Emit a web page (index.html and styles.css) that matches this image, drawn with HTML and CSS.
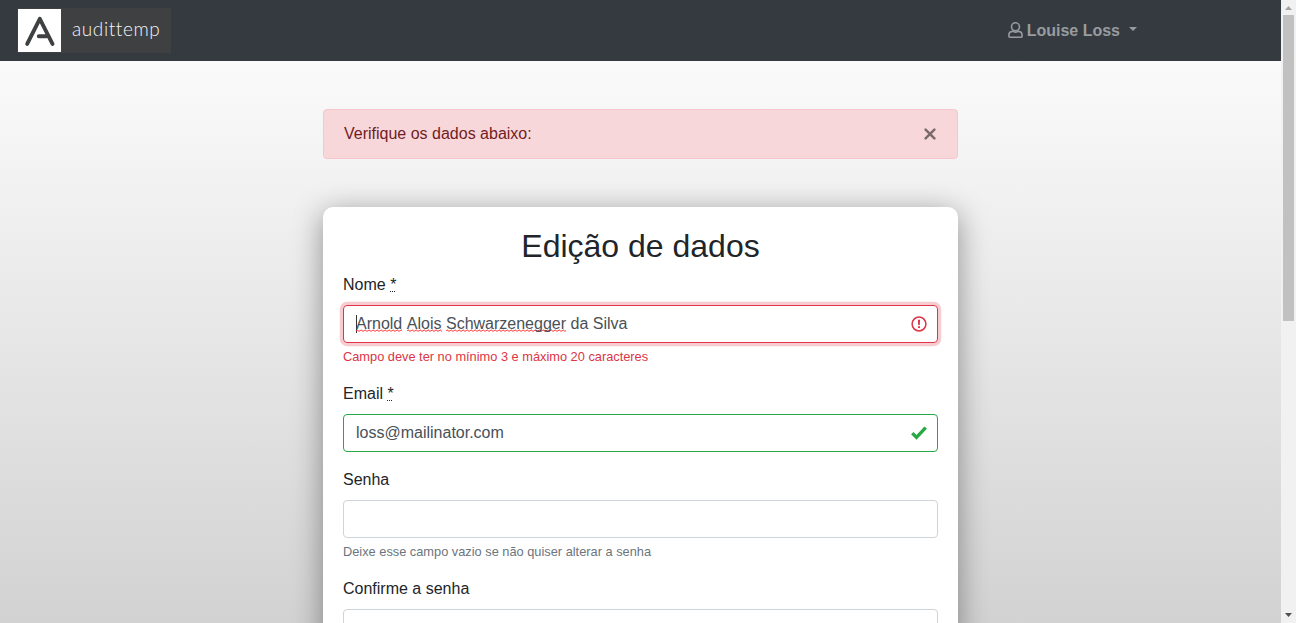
FILE: index.html
```html
<!DOCTYPE html>
<html lang="pt-BR">
<head>
<meta charset="utf-8">
<title>Edição de dados</title>
<link rel="stylesheet" href="styles.css">
</head>
<body>
<div class="viewport">
  <div class="page">
    <header class="navbar">
      <a class="brand">
        <svg class="brand-mark" viewBox="0 0 43 43" width="43" height="43"><rect width="43" height="43" fill="#fff"/><path d="M9.2 34.9 21.8 9.8 34.5 34.9M20.8 27.2H28.5" fill="none" stroke="#3e4042" stroke-width="3.9" stroke-linecap="round" stroke-linejoin="round"/></svg>
        <span class="brand-name">audittemp</span>
      </a>
      <a class="user">
        <svg class="user-icon" viewBox="0 0 15 16" width="15" height="16"><g fill="none" stroke="currentColor" stroke-width="1.6"><circle cx="7.5" cy="4.8" r="4"/><path d="M4.6 9.4C2.2 9.6.9 11.1.9 13.2v1c0 .6.4 1 1 1h11.2c.6 0 1-.4 1-1v-1c0-2.1-1.3-3.6-3.7-3.8-1.8.9-4 .9-5.8 0Z"/></g></svg>
        <span class="user-name">Louise Loss</span>
        <span class="caret-down"></span>
      </a>
    </header>
    <main class="content">
      <div class="alert">
        <span>Verifique os dados abaixo:</span>
        <svg class="close" viewBox="0 0 12 12" width="12" height="12"><path d="M1.6 1.6 10.4 10.4M10.4 1.6 1.6 10.4" stroke="#7c6b6d" stroke-width="2.5" stroke-linecap="round"/></svg>
      </div>
      <section class="card">
        <h2 class="title">Edição de dados</h2>
        <div class="group">
          <div class="label">Nome <abbr class="required" title="obrigatório">*</abbr></div>
          <div class="field invalid">
            <span class="value"><i class="cursor"></i><span class="misspelt first">Arnold</span> <span class="misspelt">Alois</span> <span class="misspelt">Schwarzenegger</span> da Silva</span>
            <svg viewBox="0 0 16 16" width="16" height="16"><circle cx="8" cy="8" r="6.9" fill="none" stroke="#dc3545" stroke-width="1.5"/><path d="M6.9 3.8h2.2l-.3 5.2H7.2Z" fill="#dc3545"/><circle cx="8" cy="11.2" r="1.1" fill="#dc3545"/></svg>
          </div>
          <div class="help error">Campo deve ter no mínimo 3 e máximo 20 caracteres</div>
        </div>
        <div class="group">
          <div class="label">Email <abbr class="required" title="obrigatório">*</abbr></div>
          <div class="field valid">
            <span class="value">loss@mailinator.com</span>
            <svg viewBox="0 0 16 16" width="16" height="16"><path d="M1.3 8.1 5.5 12.4 14.7 2.6" fill="none" stroke="#28a745" stroke-width="3.4"/></svg>
          </div>
        </div>
        <div class="group">
          <div class="label">Senha</div>
          <div class="field"></div>
          <div class="help">Deixe esse campo vazio se não quiser alterar a senha</div>
        </div>
        <div class="group">
          <div class="label">Confirme a senha</div>
          <div class="field"></div>
        </div>
      </section>
    </main>
  </div>
  <div class="scrollbar">
    <svg viewBox="0 0 15 15" width="15" height="15"><path d="M4 10h7L7.5 6Z" fill="#a3a3a3"/></svg>
    <div class="thumb"></div>
    <svg class="down" viewBox="0 0 15 15" width="15" height="15"><path d="M4 5h7L7.5 9Z" fill="#505050"/></svg>
  </div>
</div>
</body>
</html>
```
FILE: styles.css
```css
* { box-sizing: border-box; }
body {
  margin: 0;
  font: 16px/24px "Liberation Sans", Arial, sans-serif;
  color: #212529;
  overflow: hidden;
}
.viewport { display: flex; height: 623px; overflow: hidden; }
.page {
  flex: 1;
  height: 623px;
  overflow: hidden;
  background: linear-gradient(#ffffff, #d2d2d2);
}
.navbar {
  display: flex;
  align-items: center;
  justify-content: space-between;
  height: 61px;
  padding: 0 144px 0 17px;
  background: #343a40;
}
.brand {
  display: flex;
  align-items: center;
  width: 154px;
  height: 45px;
  padding-left: 1px;
  background: #3e4042;
}
.brand-mark { display: block; }
.brand-name {
  margin-left: 11px;
  padding-bottom: 3px;
  font: 300 19px/24px Lato, sans-serif;
  letter-spacing: 0.6px;
  color: #f4f4f4;
}
.user { display: flex; align-items: center; color: #999c9f; font-weight: 700; }
.user-icon { margin: -2px 4px 0 0; }
.caret-down {
  margin: -3px 0 0 9px;
  border: 4.8px solid transparent;
  border-top-color: currentColor;
  border-bottom: 0;
}
.content { width: 635px; margin: 0 auto; padding-top: 48px; }
.alert {
  display: flex;
  align-items: center;
  justify-content: space-between;
  height: 50px;
  padding: 0 21px 0 20px;
  border: 1px solid #f5c6cb;
  border-radius: 4px;
  background: #f8d7da;
  color: #721c24;
}
.close { display: block; }
.card {
  height: 800px;
  margin-top: 48px;
  padding: 20px;
  border-radius: 10px;
  background: #fff;
  box-shadow: 0 6px 30px rgba(0, 0, 0, 0.4);
}
.title {
  margin: 0 0 8px;
  font-size: 32px;
  font-weight: 400;
  line-height: 38px;
  text-align: center;
}
.group { margin-bottom: 16px; }
.label { margin-bottom: 8px; }
.required { text-decoration: underline dotted 1px; }
.field {
  display: flex;
  align-items: center;
  justify-content: space-between;
  height: 38px;
  padding: 0 10px 0 12px;
  border: 1px solid #ced4da;
  border-radius: 4px;
  color: #495057;
}
.invalid { border-color: #dc3545; box-shadow: 0 0 0 3.2px rgba(220, 53, 69, 0.25); }
.valid { border-color: #28a745; }
.misspelt {
  background: url("data:image/svg+xml,%3Csvg xmlns='http://www.w3.org/2000/svg' width='4' height='3'%3E%3Cpath d='M-1 3 1 .8 3 2.4 5 .8' fill='none' stroke='%23f22' stroke-width='.9'/%3E%3C/svg%3E") repeat-x 0 100%;
}
.first { margin-right: 1px; }
.cursor {
  display: inline-block;
  width: 1px;
  height: 18px;
  margin-right: -1px;
  background: #333;
  vertical-align: -4px;
}
.help { margin-top: 4px; font-size: 12.8px; line-height: 19px; color: #6c757d; }
.error { color: #dc3545; }
.scrollbar {
  display: flex;
  flex-direction: column;
  width: 15px;
  height: 623px;
  background: #f1f1f1;
}
.thumb { width: 11px; height: 306px; margin: 0 2px; background: #c1c1c1; }
.down { margin-top: auto; }
```
